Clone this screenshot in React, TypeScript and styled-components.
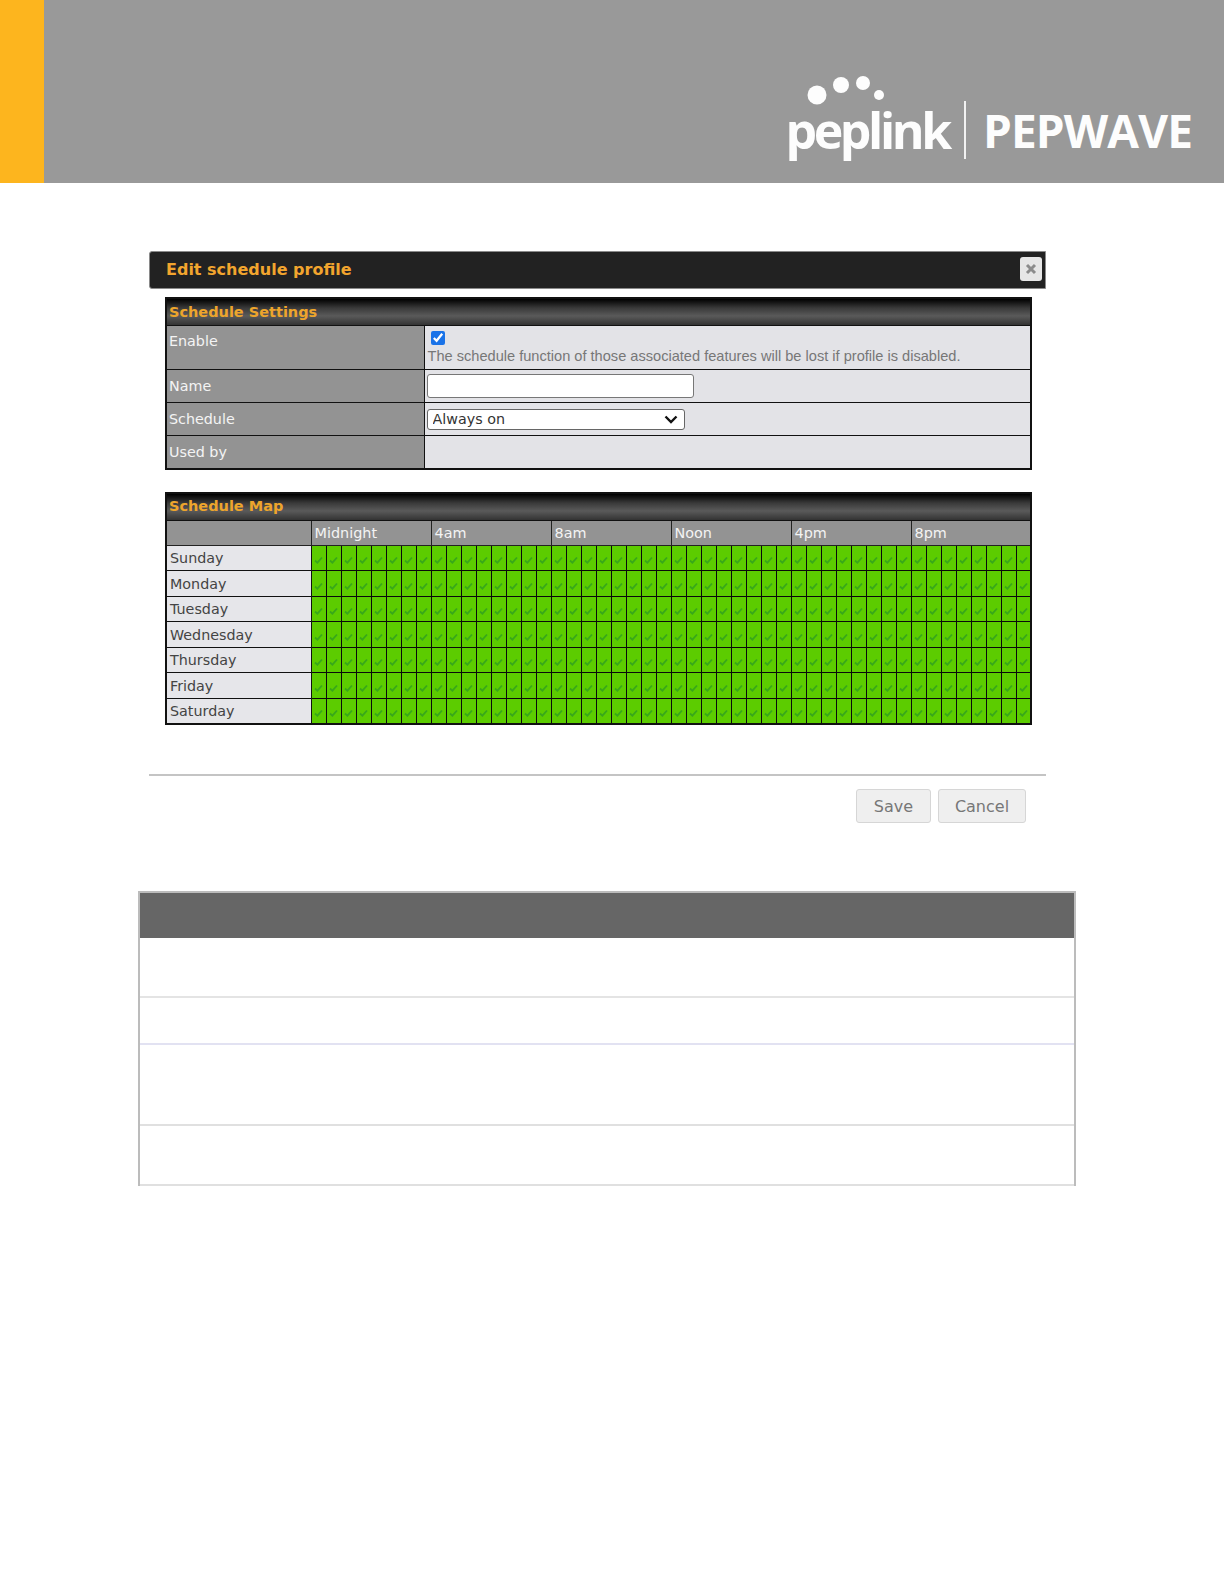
import React from "react";
import styled, { createGlobalStyle } from "styled-components";

const Global = createGlobalStyle`
  html, body { margin: 0; padding: 0; background: #fff; }
  #root { min-height: 1584px; font-family: "DejaVu Sans", sans-serif; }
`;

const Banner = styled.header`
  display: flex;
  height: 183px;
  background: #999999;
`;
const Accent = styled.div`
  width: 44px;
  background: #fdb51e;
`;
const Logo = styled.div`
  position: relative;
  margin-left: auto;
  display: flex;
  align-items: flex-end;
  padding: 0 32px 24px 0;
  color: #fdfdfd;
`;
const Wordmark = styled.span`
  font-family: "Open Sans", sans-serif;
  font-weight: 700;
  font-size: 50px;
  line-height: 58px;
  letter-spacing: -3.4px;
`;
const LogoRule = styled.span`
  width: 2px;
  height: 58px;
  margin: 0 17px 0 15px;
  background: #f2f2f2;
`;
const Brand = styled.span`
  font-family: "Open Sans", sans-serif;
  font-weight: 700;
  font-size: 46px;
  line-height: 58px;
  letter-spacing: -0.9px;
`;
const Dots = styled.svg`
  position: absolute;
  left: 0;
  top: 69px;
`;

const Modal = styled.section`
  width: 897px;
  margin: 68px 0 0 149px;
`;
const TitleBar = styled.div`
  display: flex;
  align-items: center;
  justify-content: space-between;
  box-sizing: border-box;
  height: 38px;
  padding: 0 3px 2px 16px;
  background: #222222;
  border: 1px solid #8a8a8a;
  border-radius: 3px 0 0 3px;
`;
const Title = styled.h2`
  margin: 0;
  font-size: 16px;
  font-weight: 700;
  color: #f2a52e;
`;
const Close = styled.button`
  display: flex;
  align-items: center;
  justify-content: center;
  width: 22px;
  height: 24px;
  padding: 0;
  border: 0;
  border-radius: 3px;
  background: #e6e6e6;
  color: #8b8b8b;
`;
const Table = styled.table<{ $top: number }>`
  width: 867px;
  margin: ${(p) => p.$top}px 0 0 16px;
  border-collapse: collapse;
  table-layout: fixed;
  font-size: 14.3px;
  border: 2px solid #111;
`;
const SectionHead = styled.th`
  height: 25px;
  padding: 0 2px 1px;
  text-align: left;
  font-size: 14.5px;
  font-weight: 700;
  color: #eda52c;
  background: linear-gradient(#000 0%, #3a3a3a 35%, #5a5a5a 65%, #333 100%);
  border: 1px solid #111;
`;
const Label = styled.td<{ $h: number; $pad: number }>`
  box-sizing: border-box;
  height: ${(p) => p.$h}px;
  padding: ${(p) => p.$pad}px 2px 0;
  vertical-align: top;
  background: #939393;
  color: #f4f4f4;
  border: 1.5px solid #111;
`;
const Value = styled.td`
  padding: 0 2px;
  vertical-align: middle;
  background: #e3e3e7;
  border: 1.5px solid #111;
`;
const Check = styled.input`
  display: block;
  width: 14px;
  height: 14px;
  margin: 0 0 3px 4px;
  accent-color: #1a73e8;
`;
const Note = styled.div`
  margin-left: 1px;
  font-family: "Liberation Sans", sans-serif;
  font-size: 14.6px;
  line-height: 16px;
  color: #777;
  white-space: nowrap;
`;
const NameInput = styled.input`
  display: block;
  box-sizing: border-box;
  width: 267px;
  height: 24px;
  border: 1px solid #777;
  border-radius: 3px;
  background: #fff;
`;
const SelectWrap = styled.div`
  position: relative;
  width: 258px;
`;
const ScheduleSelect = styled.select`
  display: block;
  appearance: none;
  box-sizing: border-box;
  width: 100%;
  height: 21px;
  padding: 0 0 0 5px;
  border: 1px solid #666;
  border-radius: 3px;
  background-color: #fff;
  color: #333;
  font-family: "DejaVu Sans", sans-serif;
  font-size: 14.3px;
`;
const Chevron = styled.svg`
  position: absolute;
  right: 7px;
  top: 6px;
  pointer-events: none;
`;
const HourHead = styled.th`
  height: 24px;
  padding: 0 2px 0 3px;
  text-align: left;
  font-size: 14.4px;
  font-weight: 400;
  color: #f4f4f4;
  background: #939393;
  border: 1px solid #222;
`;
const Day = styled.td`
  height: 23.5px;
  padding: 1px 3px 0;
  background: #e6e6ea;
  color: #444;
  border: 1px solid #111;
`;
const Slot = styled.td`
  padding: 0;
  text-align: center;
  vertical-align: middle;
  background: #5ccc00;
  border: 1px solid #0a0a0a;
  line-height: 0;
`;
const Tick = styled.svg`
  margin-top: 5px;
`;

const Divider = styled.hr`
  height: 2px;
  margin: 49px 0 0;
  border: 0;
  background: #c4c4c4;
`;
const Actions = styled.div`
  display: flex;
  justify-content: flex-end;
  gap: 7px;
  padding: 13px 20px 0 0;
`;
const Button = styled.button<{ $w: number }>`
  box-sizing: border-box;
  width: ${(p) => p.$w}px;
  height: 34px;
  padding: 1px 0 0;
  border: 1px solid #d6d6d6;
  border-radius: 3px;
  background: #efefef;
  color: #777;
  font-family: "DejaVu Sans", sans-serif;
  font-size: 16px;
`;

const DocTable = styled.div`
  box-sizing: border-box;
  width: 938px;
  margin: 68px 0 0 138px;
  border: solid #bcbcbc;
  border-width: 2px 2px 0;
`;
const DocHead = styled.div`
  height: 45px;
  background: #666666;
`;
const DocRow = styled.div<{ $h: number; $line: string }>`
  box-sizing: border-box;
  height: ${(p) => p.$h}px;
  border-bottom: 2px solid ${(p) => p.$line};
`;

const hours = ["Midnight", "4am", "8am", "Noon", "4pm", "8pm"];
const days = ["Sunday", "Monday", "Tuesday", "Wednesday", "Thursday", "Friday", "Saturday"];
const slots = Array.from({ length: 48 }, (_, i) => i);

export default function App() {
  return (
    <>
      <Global />
      <Banner>
        <Accent />
        <Logo>
          <Dots width="110" height="40" viewBox="0 0 110 40" aria-hidden="true">
            <g fill="#fdfdfd">
              <circle cx="32" cy="26" r="9.5" />
              <circle cx="56" cy="16" r="8" />
              <circle cx="78" cy="14" r="7" />
              <circle cx="94" cy="26" r="5" />
            </g>
          </Dots>
          <Wordmark>peplink</Wordmark>
          <LogoRule />
          <Brand>PEPWAVE</Brand>
        </Logo>
      </Banner>

      <Modal>
        <TitleBar>
          <Title>Edit schedule profile</Title>
          <Close aria-label="Close">
            <svg width="12" height="12" viewBox="0 0 12 12">
              <path d="M2 2l8 8M10 2l-8 8" stroke="currentColor" strokeWidth="3" />
            </svg>
          </Close>
        </TitleBar>

        <Table $top={8}>
          <colgroup>
            <col width="258" />
            <col />
          </colgroup>
          <tbody>
            <tr>
              <SectionHead colSpan={2}>Schedule Settings</SectionHead>
            </tr>
            <tr>
              <Label $h={44} $pad={7}>Enable</Label>
              <Value>
                <Check type="checkbox" defaultChecked />
                <Note>The schedule function of those associated features will be lost if profile is disabled.</Note>
              </Value>
            </tr>
            <tr>
              <Label $h={33} $pad={8}>Name</Label>
              <Value>
                <NameInput type="text" />
              </Value>
            </tr>
            <tr>
              <Label $h={33} $pad={8}>Schedule</Label>
              <Value>
                <SelectWrap>
                  <ScheduleSelect defaultValue="Always on">
                    <option>Always on</option>
                  </ScheduleSelect>
                  <Chevron width="14" height="9" viewBox="0 0 14 9" aria-hidden="true">
                    <path d="M1.5 1.5L7 7l5.5-5.5" fill="none" stroke="#111" strokeWidth="2.4" />
                  </Chevron>
                </SelectWrap>
              </Value>
            </tr>
            <tr>
              <Label $h={33} $pad={8}>Used by</Label>
              <Value />
            </tr>
          </tbody>
        </Table>

        <Table $top={22}>
          <colgroup>
            <col width="145" />
            {slots.map((s) => (
              <col key={s} width="15" />
            ))}
          </colgroup>
          <tbody>
            <tr>
              <SectionHead colSpan={49}>Schedule Map</SectionHead>
            </tr>
            <tr>
              <HourHead />
              {hours.map((h) => (
                <HourHead key={h} colSpan={8}>
                  {h}
                </HourHead>
              ))}
            </tr>
            {days.map((d) => (
              <tr key={d}>
                <Day>{d}</Day>
                {slots.map((s) => (
                  <Slot key={s}>
                    <Tick width="9" height="8" viewBox="0 0 9 8" aria-hidden="true">
                      <path d="M1 4.5l2.4 2.2L8 1.5" fill="none" stroke="#38a81a" strokeWidth="1.8" />
                    </Tick>
                  </Slot>
                ))}
              </tr>
            ))}
          </tbody>
        </Table>

        <Divider />
        <Actions>
          <Button $w={75}>Save</Button>
          <Button $w={88}>Cancel</Button>
        </Actions>
      </Modal>

      <DocTable>
        <DocHead />
        <DocRow $h={60} $line="#e4e4e4" />
        <DocRow $h={47} $line="#e2e2f2" />
        <DocRow $h={81} $line="#e0e0e0" />
        <DocRow $h={60} $line="#e0e0e0" />
      </DocTable>
    </>
  );
}
